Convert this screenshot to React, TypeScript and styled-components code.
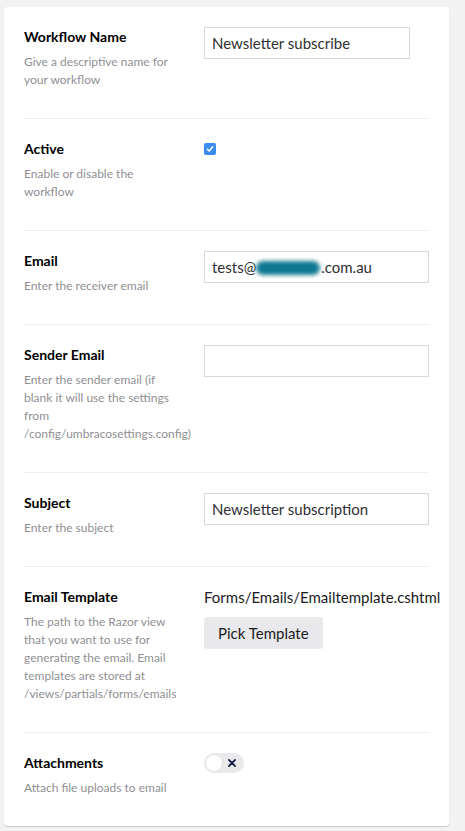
import React from 'react';
import styled, { createGlobalStyle } from 'styled-components';

const GlobalStyle = createGlobalStyle`
  body {
    margin: 0;
    background: #f3f2f3;
    font-family: Lato, "Open Sans", sans-serif;
    color: #1b1b1d;
  }
`;

const Page = styled.div`
  padding: 7px 0 5px 4px;
`;

const Card = styled.div`
  width: 445px;
  box-sizing: border-box;
  padding: 0 20px;
  background: #fff;
  border-radius: 4px;
  box-shadow: 0 1px 1px rgba(0, 0, 0, 0.18);
`;

const Row = styled.div`
  display: grid;
  grid-template-columns: 150px 225px;
  column-gap: 30px;
  padding: 20px 0 29px;
  border-bottom: 1px solid #efeef0;

  &:last-child {
    border-bottom: none;
  }
`;

const Header = styled.div`
  display: flex;
  flex-direction: column;
`;

const Label = styled.label`
  font-size: 14px;
  font-weight: 700;
  line-height: 20px;
  color: #000;
  margin-bottom: 6px;
`;

const Description = styled.div`
  font-size: 12px;
  line-height: 18px;
  color: #8f8f93;
`;

const Control = styled.div`
  display: flex;
  flex-direction: column;
  align-items: flex-start;
`;

const TextBox = styled.div<{ $width?: number }>`
  width: ${({ $width }) => ($width ? `${$width}px` : '100%')};
  height: 32px;
  box-sizing: border-box;
  border: 1px solid #d8d7d9;
  padding: 0 7px;
  display: flex;
  align-items: center;
  font-size: 15px;
  color: #303033;
  white-space: nowrap;
`;

const Blurred = styled.span`
  display: inline-block;
  width: 64px;
  height: 14px;
  margin: 2px 1px 0 0;
  border-radius: 8px;
  background: #0f7891;
  filter: blur(2px);
`;

const CheckBox = styled.span`
  width: 12px;
  height: 12px;
  margin-top: 4px;
  border-radius: 2px;
  background: #3a8cf0;
  display: flex;
  align-items: center;
  justify-content: center;
`;

const PathText = styled.div`
  font-size: 15px;
  line-height: 20px;
  color: #1b1b1d;
  white-space: nowrap;
  margin-bottom: 10px;
`;

const Button = styled.button`
  height: 32px;
  padding: 0 14px;
  border: none;
  border-radius: 3px;
  background: #e9e9eb;
  font-family: inherit;
  font-size: 15px;
  color: #1b1b1d;
`;

const Toggle = styled.span`
  position: relative;
  width: 40px;
  height: 20px;
  border-radius: 10px;
  background: #e9e9eb;
  display: flex;
  align-items: center;
  justify-content: flex-end;
  padding-right: 8px;
  box-sizing: border-box;
`;

const Knob = styled.span`
  position: absolute;
  left: 1px;
  top: 1px;
  width: 18px;
  height: 18px;
  box-sizing: border-box;
  border-radius: 50%;
  background: #fff;
  border: 1px solid #e3e3e5;
`;

type FieldProps = {
  label: string;
  description: string;
  children: React.ReactNode;
};

const Field = ({ label, description, children }: FieldProps) => (
  <Row>
    <Header>
      <Label>{label}</Label>
      <Description>{description}</Description>
    </Header>
    <Control>{children}</Control>
  </Row>
);

const App = () => (
  <Page>
    <GlobalStyle />
    <Card>
      <Field label="Workflow Name" description="Give a descriptive name for your workflow">
        <TextBox $width={206}>Newsletter subscribe</TextBox>
      </Field>

      <Field label="Active" description="Enable or disable the workflow">
        <CheckBox>
          <svg width="8" height="8" viewBox="0 0 8 8">
            <path d="M1.3 4.2 L3.2 6 L6.7 1.8" fill="none" stroke="#fff" strokeWidth="1.5" strokeLinecap="round" strokeLinejoin="round" />
          </svg>
        </CheckBox>
      </Field>

      <Field label="Email" description="Enter the receiver email">
        <TextBox>
          tests@<Blurred />.com.au
        </TextBox>
      </Field>

      <Field
        label="Sender Email"
        description="Enter the sender email (if blank it will use the settings from /config/umbracosettings.config)"
      >
        <TextBox />
      </Field>

      <Field label="Subject" description="Enter the subject">
        <TextBox>Newsletter subscription</TextBox>
      </Field>

      <Field
        label="Email Template"
        description="The path to the Razor view that you want to use for generating the email. Email templates are stored at /views/partials/forms/emails"
      >
        <PathText>Forms/Emails/Emailtemplate.cshtml</PathText>
        <Button>Pick Template</Button>
      </Field>

      <Field label="Attachments" description="Attach file uploads to email">
        <Toggle>
          <Knob />
          <svg width="8" height="8" viewBox="0 0 8 8">
            <path d="M1 1 L7 7 M7 1 L1 7" stroke="#1b264f" strokeWidth="1.8" strokeLinecap="round" />
          </svg>
        </Toggle>
      </Field>
    </Card>
  </Page>
);

export default App;
